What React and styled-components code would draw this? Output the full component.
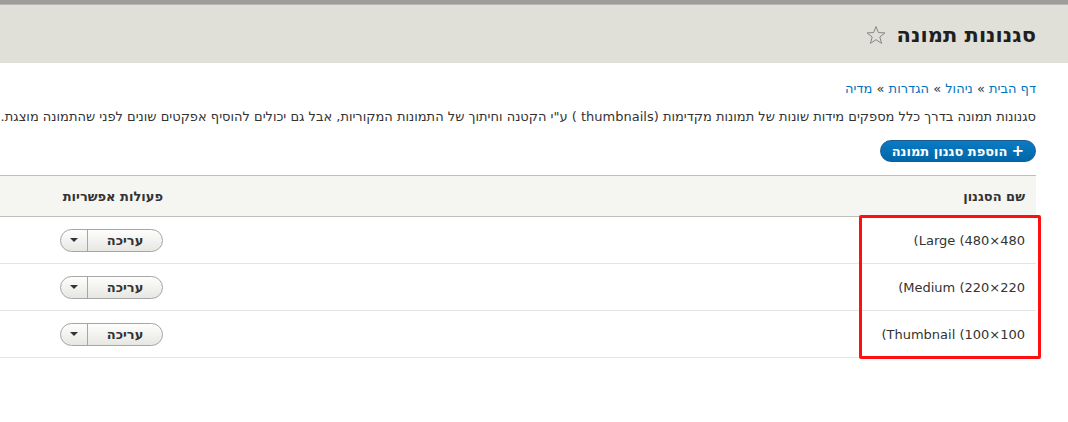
import styled, { createGlobalStyle } from "styled-components";

const GlobalStyle = createGlobalStyle`
  html, body {
    margin: 0;
    padding: 0;
    background: #ffffff;
  }
  body {
    font-family: "DejaVu Sans", "Liberation Sans", sans-serif;
    font-size: 13px;
    color: #333;
  }
`;

const Frame = styled.div`
  direction: rtl;
  width: 100%;
  height: 422px;
  overflow: hidden;
  position: relative;
`;

const Page = styled.div`
  width: 1400px;
`;

const Header = styled.header`
  height: 63px;
  box-sizing: border-box;
  background: #e0e0d8;
  border-top: 4px solid #9c9c9a;
  box-shadow: inset 0 1px 0 #b8b8b4;
  display: flex;
  align-items: center;
  padding: 2px 32px 0;
`;

const Title = styled.h1`
  margin: 0;
  font-size: 21px;
  font-weight: bold;
  color: #1f1f1f;
  display: flex;
  align-items: center;
  gap: 11px;
`;

const Content = styled.main`
  padding: 17px 32px 0;
`;

const Breadcrumb = styled.nav`
  line-height: 18px;
  color: #333;
  a {
    color: #0074bd;
    text-decoration: none;
  }
`;

const Description = styled.p`
  margin: 10px 0 0;
  line-height: 18px;
  white-space: nowrap;
`;

const AddButton = styled.a`
  display: inline-flex;
  align-items: center;
  gap: 4px;
  margin-top: 14px;
  height: 22px;
  box-sizing: border-box;
  padding: 0 11px 0 11px;
  border-radius: 12px;
  background: linear-gradient(#0a7bc4, #0067a8);
  border: 1px solid #1e5c90;
  color: #fff;
  font-weight: bold;
  font-size: 13px;
  text-decoration: none;
`;

const Plus = styled.span`
  font-size: 15px;
  line-height: 1;
`;

const Table = styled.table`
  margin-top: 13px;
  width: 100%;
  border-collapse: collapse;
  font-size: 13px;
`;

const Th = styled.th`
  height: 40px;
  padding: 0 11px;
  text-align: right;
  font-weight: bold;
  background: #f5f5f2;
  border-top: 1px solid #bfbfba;
  border-bottom: 1px solid #bfbfba;
  color: #333;
  width: ${(p) => (p.$w ? p.$w : "auto")};
`;

const Td = styled.td`
  height: 46px;
  padding: 0 11px;
  border-bottom: 1px solid #e6e4df;
  color: #333;
`;

const NameTail = styled.span`
  unicode-bidi: isolate;
  direction: rtl;
`;

const Dropbutton = styled.div`
  display: inline-flex;
  height: 23px;
  box-sizing: border-box;
  border: 1px solid #a6a6a6;
  border-radius: 12px;
  background: linear-gradient(#fefefe, #e6e6e2);
  overflow: hidden;
  vertical-align: middle;
`;

const DropMain = styled.span`
  width: 74px;
  display: flex;
  align-items: center;
  justify-content: center;
  font-weight: bold;
  color: #333;
`;

const DropToggle = styled.span`
  width: 26px;
  border-right: 1px solid #a6a6a6;
  display: flex;
  align-items: center;
  justify-content: center;
  &::after {
    content: "";
    border-left: 4px solid transparent;
    border-right: 4px solid transparent;
    border-top: 4px solid #333;
  }
`;

const Highlight = styled.div`
  position: absolute;
  left: 859px;
  top: 215px;
  width: 182px;
  height: 144px;
  box-sizing: border-box;
  border: 3px solid #ff1010;
  border-radius: 2px;
  pointer-events: none;
`;

const styles = [
  { name: "Large (480×480", dims: ")" },
  { name: "Medium (220×220", dims: ")" },
  { name: "Thumbnail (100×100", dims: ")" },
];

function Star() {
  return (
    <svg width="20" height="20" viewBox="0 0 20 20">
      <path
        d="M10 1.5 L12.4 7.6 L18.9 7.9 L13.8 12 L15.6 18.4 L10 14.7 L4.4 18.4 L6.2 12 L1.1 7.9 L7.6 7.6 Z"
        fill="none"
        stroke="#878782"
        strokeWidth="1"
        strokeLinejoin="round"
      />
    </svg>
  );
}

export default function App() {
  return (
    <>
      <GlobalStyle />
      <Frame>
        <Page>
          <Header>
            <Title>
              סגנונות תמונה
              <Star />
            </Title>
          </Header>
          <Content>
            <Breadcrumb>
              <a href="#">דף הבית</a> » <a href="#">ניהול</a> »{" "}
              <a href="#">הגדרות</a> » <a href="#">מדיה</a>
            </Breadcrumb>
            <Description>
              סגנונות תמונה בדרך כלל מספקים מידות שונות של תמונות מקדימות
              (thumbnails ) ע"י הקטנה וחיתוך של התמונות המקוריות, אבל גם יכולים
              להוסיף אפקטים שונים לפני שהתמונה מוצגת.
            </Description>
            <AddButton href="#">
              <Plus>+</Plus> הוספת סגנון תמונה
            </AddButton>
            <Table>
              <thead>
                <tr>
                  <Th $w="840px">שם הסגנון</Th>
                  <Th>פעולות אפשריות</Th>
                </tr>
              </thead>
              <tbody>
                {styles.map((s) => (
                  <tr key={s.name}>
                    <Td>
                      {s.name}
                      <NameTail>{s.dims}</NameTail>
                    </Td>
                    <Td>
                      <Dropbutton>
                        <DropMain>עריכה</DropMain>
                        <DropToggle />
                      </Dropbutton>
                    </Td>
                  </tr>
                ))}
              </tbody>
            </Table>
          </Content>
        </Page>
        <Highlight />
      </Frame>
    </>
  );
}
